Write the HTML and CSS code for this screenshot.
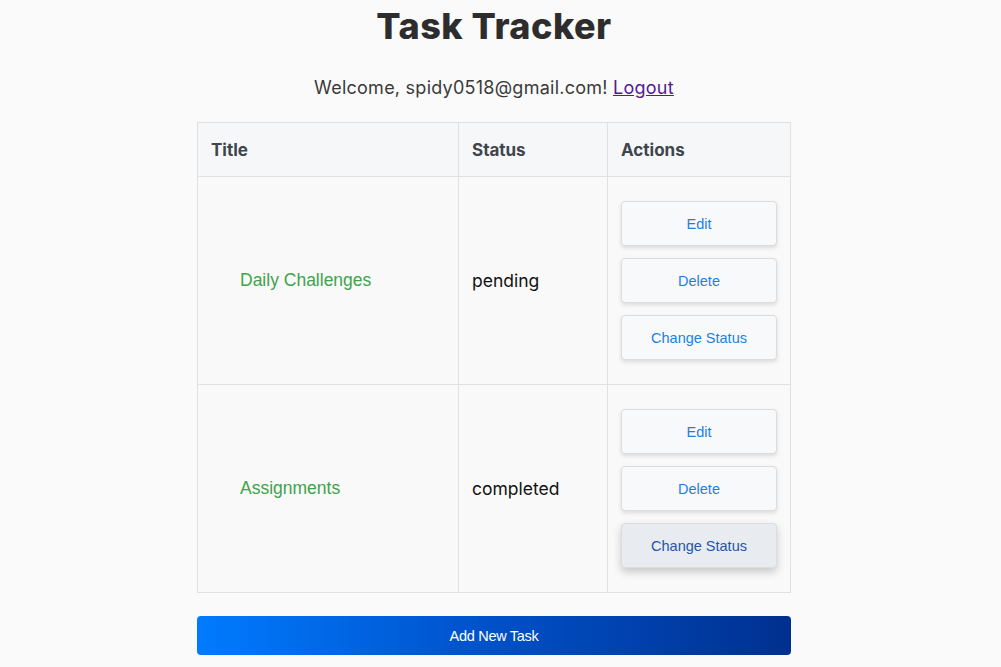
FILE: index.html
```html
<!DOCTYPE html>
<html>
<head>
<meta charset="utf-8">
<link rel="stylesheet" href="styles.css">
</head>
<body>
<div class="page">
  <h1 class="title">Task Tracker</h1>
  <p class="welcome">Welcome, spidy0518@gmail.com! <a href="#" class="logout">Logout</a></p>
  <table class="tasks">
    <colgroup>
      <col class="c1">
      <col class="c2">
      <col class="c3">
    </colgroup>
    <thead>
      <tr>
        <th>Title</th>
        <th>Status</th>
        <th>Actions</th>
      </tr>
    </thead>
    <tbody>
      <tr>
        <td><span class="task-name">Daily Challenges</span></td>
        <td class="status">pending</td>
        <td>
          <div class="actions">
            <button class="btn">Edit</button>
            <button class="btn">Delete</button>
            <button class="btn">Change Status</button>
          </div>
        </td>
      </tr>
      <tr>
        <td><span class="task-name">Assignments</span></td>
        <td class="status">completed</td>
        <td>
          <div class="actions">
            <button class="btn">Edit</button>
            <button class="btn">Delete</button>
            <button class="btn btn-active">Change Status</button>
          </div>
        </td>
      </tr>
    </tbody>
  </table>
  <button class="add-btn">Add New Task</button>
</div>
</body>
</html>
```
FILE: styles.css
```css
html, body {
  margin: 0;
  padding: 0;
  background: #fafafa;
}
body {
  padding-right: 13px;
  font-family: "Inter", "Open Sans", sans-serif;
  color: #333;
}
.page {
  width: 594px;
  margin: 0 auto;
  display: flex;
  flex-direction: column;
}
.title {
  margin: 4px 0 0;
  text-align: center;
  font-size: 36px;
  line-height: 44px;
  font-weight: 800;
  color: #2d2d2d;
  letter-spacing: 0.5px;
}
.welcome {
  margin: 28px 0 0;
  text-align: center;
  font-size: 18px;
  line-height: 24px;
  color: #3a3a3a;
  letter-spacing: 0.25px;
}
.logout {
  color: #551a8b;
}
.tasks {
  margin-top: 22px;
  width: 593px;
  table-layout: fixed;
  border-collapse: collapse;
  background: #f8f9fa;
}
.c1 { width: 261px; }
.c2 { width: 149px; }
.c3 { width: 183px; }
.tasks th, .tasks td {
  border: 1px solid #e0e0e0;
  padding: 0 13px 0 13px;
  text-align: left;
  vertical-align: middle;
}
.tasks th {
  height: 53px;
  font-size: 17px;
  font-weight: 700;
  color: #3f454c;
  background: #f6f7f9;
}
.tasks td {
  height: 207px;
  background: #f9f9f9;
}
.task-name {
  padding-left: 29px;
  font-family: "Liberation Sans", Arial, sans-serif;
  font-size: 17.5px;
  color: #3fa34d;
}
.status {
  font-size: 17.5px;
  color: #111;
}
.actions {
  display: flex;
  flex-direction: column;
  gap: 12px;
}
.btn {
  height: 45px;
  width: 156px;
  border: 1px solid #dcdcdc;
  border-radius: 4px;
  background: #f8f9fb;
  box-shadow: 0 2px 4px rgba(0, 0, 0, 0.12);
  font-family: "Liberation Sans", Arial, sans-serif;
  font-size: 14.5px;
  color: #1f7fe0;
  padding: 0;
}
.btn-active {
  background: #e8ebef;
  color: #1e56a8;
  box-shadow: 0 4px 8px rgba(0, 0, 0, 0.2);
}
.add-btn {
  margin-top: 23px;
  height: 39px;
  width: 594px;
  border: none;
  border-radius: 4px;
  background: linear-gradient(90deg, #007bff 0%, #0050c8 50%, #00308f 100%);
  color: #fff;
  font-family: "Liberation Sans", Arial, sans-serif;
  font-size: 14.5px;
  letter-spacing: -0.3px;
}
```
